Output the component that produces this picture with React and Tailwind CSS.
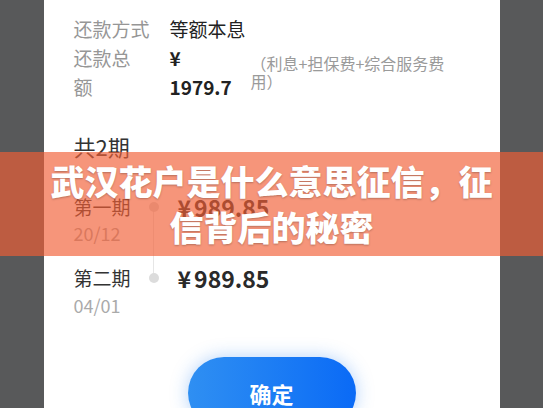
import React from "react";

const font = { fontFamily: '"Noto Sans CJK SC", "Noto Sans", sans-serif' };

export default function App() {
  return (
    <div
      className="relative w-[543px] h-[408px] overflow-hidden bg-[#58595a]"
      style={font}
    >
      <div className="mx-auto w-[456px] h-[408px] bg-white pl-[30px] pt-[14px] overflow-hidden">
        {/* 还款方式 */}
        <div className="flex text-[19px] leading-[29px]">
          <div className="w-[96px] text-[#969696]">还款方式</div>
          <div className="text-[#222]">等额本息</div>
        </div>
        {/* 还款总额 */}
        <div className="flex items-center">
          <div className="w-[96px] text-[19px] leading-[29px] text-[#969696]">
            还款总
            <br />
            额
          </div>
          <div className="w-[81px] text-[19px] leading-[29px] font-semibold text-[#222]">
            ¥
            <br />
            1979.7
          </div>
          <div className="w-[200px] text-[16px] leading-[18px] text-[#9a9a9a]">
            （利息+担保费+综合服务费用）
          </div>
        </div>
        {/* 共2期 */}
        <div className="mt-[30px] text-[22px] leading-[30px] text-[#333]">共2期</div>
        {/* timeline */}
        <div className="relative mt-[33px]">
          <div className="absolute left-[79px] top-[13px] h-[70px] w-px bg-[#e6e6e6]" />
          <div className="flex items-start">
            <div className="w-[75px]">
              <div className="text-[19px] leading-[26px] text-[#333]">第一期</div>
              <div className="text-[18px] leading-[26px] text-[#aaa]">20/12</div>
            </div>
            <div className="mt-[8px] h-[10px] w-[10px] rounded-full bg-[#dcdcdc] relative" />
            <div className="ml-[19px] flex gap-[3px] text-[23px] leading-[26px] font-bold text-[#2a2a2a]">
              <span>¥</span>
              <span>989.85</span>
            </div>
          </div>
          <div className="flex items-start mt-[19px]">
            <div className="w-[75px]">
              <div className="text-[19px] leading-[26px] text-[#333]">第二期</div>
              <div className="text-[18px] leading-[28px] text-[#aaa]">04/01</div>
            </div>
            <div className="mt-[8px] h-[10px] w-[10px] rounded-full bg-[#dcdcdc] relative" />
            <div className="ml-[19px] flex gap-[3px] text-[23px] leading-[26px] font-bold text-[#2a2a2a]">
              <span>¥</span>
              <span>989.85</span>
            </div>
          </div>
        </div>
        {/* button */}
        <div className="mt-[38px] ml-[114px] flex h-[72px] w-[168px] items-center justify-center rounded-full bg-gradient-to-r from-[#2f8ff2] to-[#0a6af6] text-[22px] font-bold text-white shadow-[0_0_18px_rgba(40,130,240,0.35)]">
          确定
        </div>
      </div>

      {/* banner overlay */}
      <div className="absolute left-0 right-0 top-[152px] h-[104px] bg-[rgba(241,94,53,0.66)] flex items-center justify-center px-[45px]">
        <div className="text-center text-[34px] leading-[46px] font-black text-white [text-shadow:0_1px_2px_rgba(0,0,0,0.25)]">
          武汉花户是什么意思征信，征信背后的秘密
        </div>
      </div>
    </div>
  );
}
